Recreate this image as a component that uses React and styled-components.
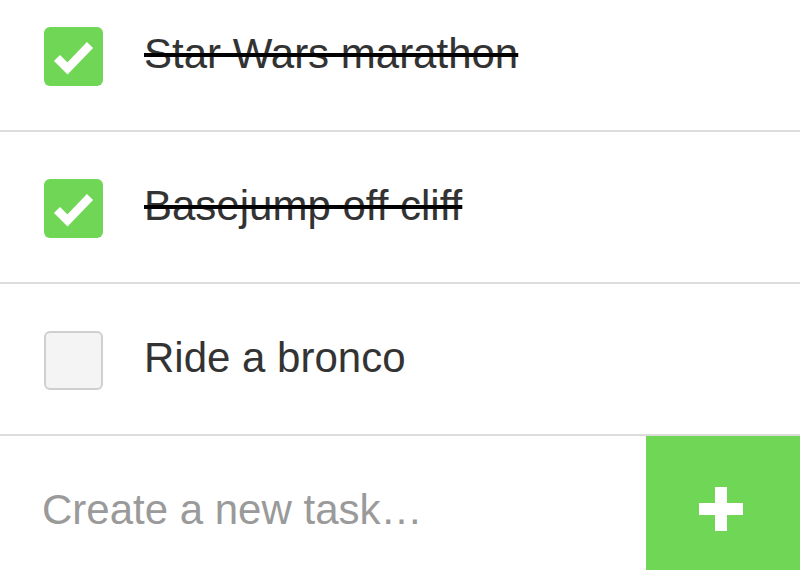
import React from "react";
import styled, { createGlobalStyle } from "styled-components";

const GREEN = "#70d656";

const GlobalStyle = createGlobalStyle`
  html, body {
    margin: 0;
    padding: 0;
    background: #ffffff;
    overflow: hidden;
  }
  body {
    font-family: Helvetica, "Liberation Sans", Arial, sans-serif;
  }
  * { box-sizing: border-box; }
`;

const Page = styled.div`
  width: 800px;
  height: 570px;
  overflow: hidden;
`;

const TaskList = styled.ul`
  list-style: none;
  margin: -20px 0 0 0;
  padding: 0;
`;

const TaskRow = styled.li`
  display: flex;
  align-items: center;
  gap: 41px;
  height: 152px;
  padding-left: 44px;
  border-bottom: 2px solid #dcdcdc;
`;

const CheckBox = styled.span`
  flex: none;
  width: 59px;
  height: 59px;
  margin-top: 2px;
  border-radius: 6px;
  display: flex;
  align-items: center;
  justify-content: center;
  background: ${(p) => (p.$done ? GREEN : "#f4f4f4")};
  border: ${(p) => (p.$done ? "none" : "2px solid #cfcfcf")};
`;

const TaskLabel = styled.span`
  font-size: 42px;
  color: #333333;
  margin-top: -2px;
  text-decoration: ${(p) => (p.$done ? "line-through" : "none")};
  text-decoration-color: #000000;
  text-decoration-thickness: 4px;
`;

const NewTaskForm = styled.form`
  display: flex;
  height: 144px;
  margin: 0;
`;

const NewTaskInput = styled.input`
  flex: 1;
  min-width: 0;
  border: none;
  outline: none;
  background: transparent;
  padding: 0 0 0 42px;
  margin-top: 4px;
  font-family: Helvetica, "Liberation Sans", Arial, sans-serif;
  font-size: 42px;
  color: #333333;
  &::placeholder {
    color: #9a9a9a;
  }
`;

const AddButton = styled.button`
  flex: none;
  width: 154px;
  height: 144px;
  border: none;
  padding: 0;
  background: ${GREEN};
  display: flex;
  align-items: center;
  justify-content: center;
  cursor: pointer;
`;

const CheckIcon = () => (
  <svg width="59" height="59" viewBox="0 0 59 59">
    <polyline
      points="13,31 23.5,41.5 46,18"
      fill="none"
      stroke="#ffffff"
      strokeWidth="8.5"
      strokeLinecap="butt"
      strokeLinejoin="miter"
    />
  </svg>
);

const PlusIcon = () => (
  <svg width="44" height="44" viewBox="0 0 44 44" style={{ marginLeft: -4, marginTop: 2 }}>
    <rect x="16" y="0" width="12" height="44" fill="#ffffff" />
    <rect x="0" y="16" width="44" height="12" fill="#ffffff" />
  </svg>
);

const tasks = [
  { id: 1, title: "Star Wars marathon", done: true },
  { id: 2, title: "Basejump off cliff", done: true },
  { id: 3, title: "Ride a bronco", done: false },
];

export default function App() {
  return (
    <Page>
      <GlobalStyle />
      <TaskList>
        {tasks.map((t) => (
          <TaskRow key={t.id}>
            <CheckBox $done={t.done}>{t.done && <CheckIcon />}</CheckBox>
            <TaskLabel $done={t.done}>{t.title}</TaskLabel>
          </TaskRow>
        ))}
      </TaskList>
      <NewTaskForm onSubmit={(e) => e.preventDefault()}>
        <NewTaskInput placeholder="Create a new task…" />
        <AddButton type="submit" aria-label="Add task">
          <PlusIcon />
        </AddButton>
      </NewTaskForm>
    </Page>
  );
}
